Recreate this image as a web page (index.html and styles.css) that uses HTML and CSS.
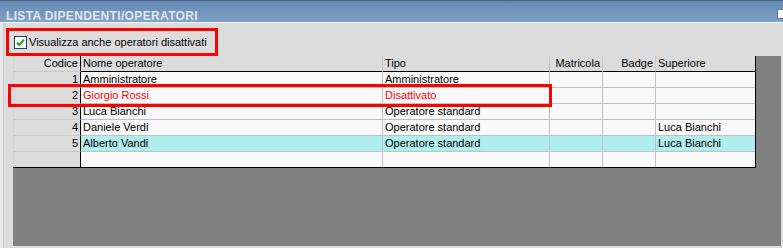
FILE: index.html
```html
<!DOCTYPE html>
<html lang="it">
<head>
    <meta charset="UTF-8">
    <title>Lista dipendenti/operatori</title>
    <link rel="stylesheet" href="styles.css">
</head>
<body>

    <!-- Barra del titolo -->
    <div class="titlebar">
        <span class="title">LISTA DIPENDENTI/OPERATORI</span>
        <span class="title-btn"></span>
    </div>

    <div class="panel">
        <!-- Filtro -->
        <label class="filter mark">
            <svg class="check" width="13" height="13" viewBox="0 0 13 13">
                <rect x="0.5" y="0.5" width="12" height="12" fill="#fff" stroke="#1e3f5f"/>
                <path d="M3 6.5 L5.2 9 L10 3.6" fill="none" stroke="#22a022" stroke-width="2"/>
            </svg>
            <span>Visualizza anche operatori disattivati</span>
        </label>

        <!-- Griglia -->
        <div class="grid-area">
            <table class="grid">
                <colgroup>
                    <col class="c-code">
                    <col class="c-name">
                    <col class="c-type">
                    <col class="c-mat">
                    <col class="c-badge">
                    <col class="c-sup">
                </colgroup>
                <thead>
                    <tr>
                        <th class="rh">Codice</th>
                        <th>Nome operatore</th>
                        <th>Tipo</th>
                        <th class="num">Matricola</th>
                        <th class="num">Badge</th>
                        <th>Superiore</th>
                    </tr>
                </thead>
                <tbody>
                    <tr>
                        <td class="rh">1</td>
                        <td>Amministratore</td>
                        <td>Amministratore</td>
                        <td></td><td></td><td></td>
                    </tr>
                    <tr class="off">
                        <td class="rh">2</td>
                        <td>Giorgio Rossi</td>
                        <td>Disattivato</td>
                        <td></td><td></td><td></td>
                    </tr>
                    <tr>
                        <td class="rh">3</td>
                        <td>Luca Bianchi</td>
                        <td>Operatore standard</td>
                        <td></td><td></td><td></td>
                    </tr>
                    <tr>
                        <td class="rh">4</td>
                        <td>Daniele Verdi</td>
                        <td>Operatore standard</td>
                        <td></td><td></td>
                        <td>Luca Bianchi</td>
                    </tr>
                    <tr class="selected">
                        <td class="rh">5</td>
                        <td>Alberto Vandi</td>
                        <td>Operatore standard</td>
                        <td></td><td></td>
                        <td>Luca Bianchi</td>
                    </tr>
                    <tr class="new-row">
                        <td class="rh"></td>
                        <td></td><td></td><td></td><td></td><td></td>
                    </tr>
                </tbody>
            </table>
        </div>

        <!-- Evidenziazione riga disattivata -->
        <div class="row-mark mark"></div>
    </div>

</body>
</html>
```

FILE: styles.css
```css
body {
    margin: 0;
    width: 783px;
    height: 248px;
    overflow: hidden;
    background: #e8e8e8;
    font-family: 'Liberation Sans', Arial, sans-serif;
    font-size: 11px;
    color: #000;
}

/* TITOLO */
.titlebar {
    height: 21px;
    border-top: 1px solid #46607e;
    border-bottom: 1px solid #f2f4f6;
    background: linear-gradient(#6588b1, #80a2c8);
    display: flex;
    justify-content: space-between;
    align-items: flex-start;
}

.title {
    color: #dfe6ee;
    font-weight: bold;
    font-size: 12px;
    letter-spacing: 0.35px;
    padding: 8px 0 0 6px;
    line-height: 14px;
}

.title-btn {
    width: 8px;
    height: 8px;
    margin: 8px -4px 0 0;
    background: #fff;
    border: 1px solid #5b7594;
}

/* PANNELLO */
.panel {
    position: relative;
    margin-left: 3px;
    border-left: 1px solid #c4c9cf;
    background: #dcdcdc;
    height: 225px;
    padding: 5px 0 0 1px;
}

.mark {
    border: 3px solid #ff0000;
}

.filter {
    display: flex;
    align-items: center;
    width: 201px;
    height: 22px;
    margin-left: 1px;
    padding-left: 5px;
    box-sizing: content-box;
}

.filter span {
    margin-left: 2px;
    line-height: 22px;
}

.check {
    display: block;
}

.grid-area {
    margin: 0 2px 0 8px;
    height: 190px;
    background: #808080;
}

/* GRIGLIA */
.grid {
    table-layout: fixed;
    border-collapse: separate;
    border-spacing: 0;
    width: 743px;
    border-right: 1px solid #000;
    border-bottom: 1px solid #000;
}

.c-code { width: 68px; }
.c-name { width: 302px; }
.c-type { width: 167px; }
.c-mat { width: 53px; }
.c-badge { width: 53px; }
.c-sup { width: 99px; }

.grid th,
.grid td {
    height: 15px;
    padding: 0 2px;
    line-height: 15px;
    font-weight: normal;
    text-align: left;
    white-space: nowrap;
    overflow: hidden;
    background: #f9f9f9;
    border-right: 1px solid #c0c0c0;
    border-bottom: 1px solid #c0c0c0;
}

.grid td:last-child,
.grid th:last-child {
    border-right: none;
}

.grid thead th {
    background: #dcdcdc;
    border-bottom-color: #000;
    border-right-color: #c8c8c8;
}

.grid .rh {
    background: #dcdcdc;
    text-align: right;
    border-right: 1px solid #000;
    border-bottom-color: #c8c8c8;
    border-left: 1px solid #d4d4d4;
}

.grid thead th.rh {
    border-bottom-color: #c8c8c8;
}

.grid .num {
    text-align: right;
}

.grid .off td {
    color: #ff0000;
}

.grid .off td.rh {
    color: #000;
}

.grid .selected td {
    background: #b0eeee;
}

.grid .selected td.rh {
    background: #dcdcdc;
}

.grid .new-row td {
    border-bottom: none;
}

.row-mark {
    position: absolute;
    left: 4px;
    top: 61px;
    width: 538px;
    height: 17px;
}
```
